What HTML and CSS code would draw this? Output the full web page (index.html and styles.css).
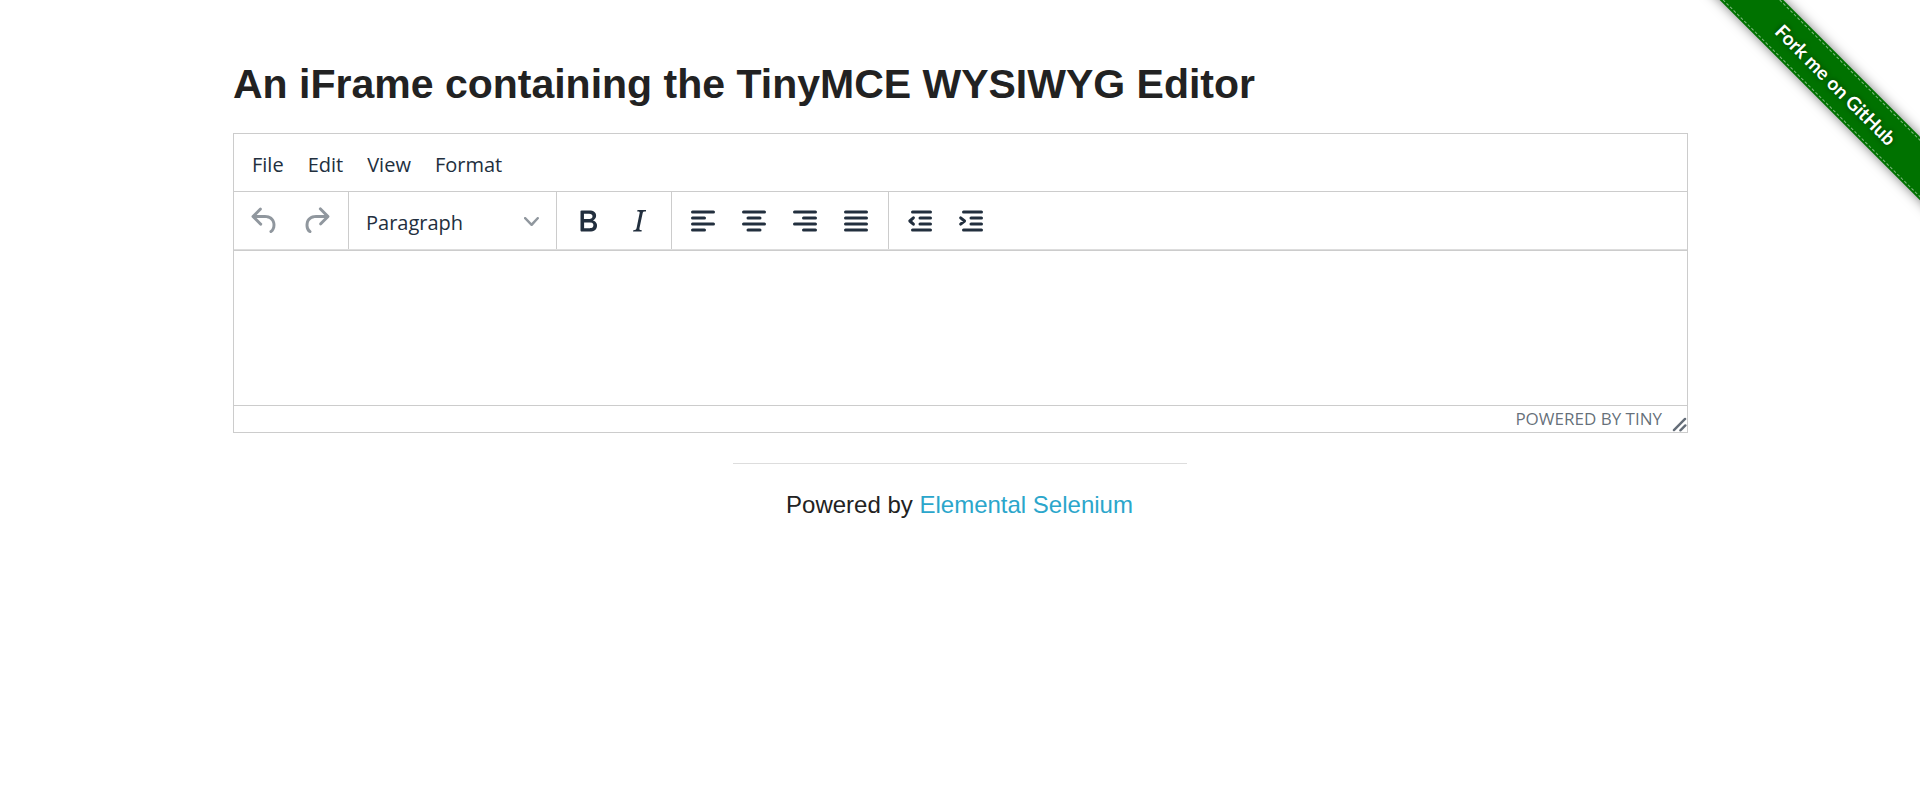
FILE: index.html
```html
<!DOCTYPE html>
<html lang="en">
<head>
<meta charset="utf-8">
<meta name="viewport" content="width=device-width, initial-scale=1">
<title>The Internet</title>
<link rel="stylesheet" href="styles.css">
</head>
<body>
<div class="ribbon-corner">
  <a class="ribbon" href="#github"><span class="ribbon-text">Fork me on GitHub</span></a>
</div>

<main class="page">
  <h1 class="title">An iFrame containing the TinyMCE WYSIWYG Editor</h1>

  <section class="editor" aria-label="Rich text editor">
    <div class="menubar" role="menubar">
      <button class="menu-item" type="button" role="menuitem">File</button>
      <button class="menu-item" type="button" role="menuitem">Edit</button>
      <button class="menu-item" type="button" role="menuitem">View</button>
      <button class="menu-item" type="button" role="menuitem">Format</button>
    </div>

    <div class="toolbar" role="toolbar" aria-label="Formatting">
      <div class="group">
        <button class="tool" type="button" aria-label="Undo" disabled>
          <svg class="icon" viewBox="0 0 24 24"><path d="M6.4 8H12c3.7 0 6.2 2 6.8 5.1.6 2.7-.4 5.6-2.3 6.8a1 1 0 0 1-1-1.8c1.1-.6 1.8-2.7 1.4-4.6-.5-2.1-2.1-3.5-4.9-3.5H6.4l3.3 3.3a1 1 0 1 1-1.4 1.4l-5-5a1 1 0 0 1 0-1.4l5-5a1 1 0 0 1 1.4 1.4L6.4 8z"/></svg>
        </button>
        <button class="tool" type="button" aria-label="Redo" disabled>
          <svg class="icon" viewBox="0 0 24 24"><path d="M17.6 10H12c-2.8 0-4.4 1.4-4.9 3.5-.4 2 .3 4 1.4 4.6a1 1 0 1 1-1 1.8c-2-1.2-2.9-4.1-2.3-6.8.6-3 3-5.1 6.8-5.1h5.6l-3.3-3.3a1 1 0 1 1 1.4-1.4l5 5a1 1 0 0 1 0 1.4l-5 5a1 1 0 0 1-1.4-1.4l3.3-3.3z"/></svg>
        </button>
      </div>
      <div class="group">
        <div class="picker">
          <select class="picker-select" aria-label="Blocks">
            <option>Paragraph</option>
            <option>Heading 1</option>
            <option>Heading 2</option>
            <option>Heading 3</option>
          </select>
          <svg class="chevron" viewBox="0 0 10 10"><path d="M8.7 2.2c.3-.3.8-.3 1 0 .4.4.4.9 0 1.2L5.7 7.8c-.3.3-.9.3-1.2 0L.2 3.4a.8.8 0 0 1 0-1.2c.3-.3.8-.3 1.1 0L5 6l3.7-3.8z"/></svg>
        </div>
      </div>
      <div class="group">
        <button class="tool" type="button" aria-label="Bold">
          <svg class="icon" viewBox="0 0 24 24"><path fill-rule="evenodd" d="M7.8 19c-.3 0-.5 0-.6-.2l-.2-.5V5.7c0-.2 0-.4.2-.5l.6-.2h5c1.5 0 2.7.3 3.5 1 .7.6 1.1 1.4 1.1 2.5a3 3 0 0 1-.6 1.9c-.4.6-1 1-1.6 1.2.4.1.9.3 1.3.6s.8.7 1 1.2c.4.4.5 1 .5 1.6 0 1.3-.4 2.3-1.3 3-.8.7-2.1 1-3.8 1H7.8zm5-8.3c.6 0 1.2-.1 1.6-.5.4-.3.6-.7.6-1.3 0-1.1-.8-1.7-2.3-1.7H9.3v3.5h3.4zm.5 6c.7 0 1.3-.1 1.7-.4.4-.4.6-.9.6-1.5s-.2-1-.7-1.4c-.4-.3-1-.4-2-.4H9.4v3.8h4z"/></svg>
        </button>
        <button class="tool" type="button" aria-label="Italic">
          <svg class="icon" viewBox="0 0 24 24"><path d="M16.7 4.7l-.1.9h-.3c-.6 0-1 0-1.4.3-.3.3-.4.6-.5 1.1l-2.1 9.8v.6c0 .5.4.8 1.4.8h.2l-.2.8H8l.2-.8h.2c1.1 0 1.8-.5 2-1.5l2-9.8.1-.5c0-.6-.4-.8-1.4-.8h-.3l.2-.9h5.8z"/></svg>
        </button>
      </div>
      <div class="group">
        <button class="tool" type="button" aria-label="Align left">
          <svg class="icon icon-lines" viewBox="0 0 24 24"><path d="M5 6h14M5 10h8M5 14h14M5 18h8"/></svg>
        </button>
        <button class="tool" type="button" aria-label="Align center">
          <svg class="icon icon-lines" viewBox="0 0 24 24"><path d="M5 6h14M8 10h8M5 14h14M8 18h8"/></svg>
        </button>
        <button class="tool" type="button" aria-label="Align right">
          <svg class="icon icon-lines" viewBox="0 0 24 24"><path d="M5 6h14M11 10h8M5 14h14M11 18h8"/></svg>
        </button>
        <button class="tool" type="button" aria-label="Justify">
          <svg class="icon icon-lines" viewBox="0 0 24 24"><path d="M5 6h14M5 10h14M5 14h14M5 18h14"/></svg>
        </button>
      </div>
      <div class="group">
        <button class="tool" type="button" aria-label="Decrease indent">
          <svg class="icon icon-lines" viewBox="0 0 24 24"><path d="M7 6h12M12 10h7M12 14h7M7 18h12M7.600 9.900L5.200 12l2.400 2.100"/></svg>
        </button>
        <button class="tool" type="button" aria-label="Increase indent">
          <svg class="icon icon-lines" viewBox="0 0 24 24"><path d="M7 6h12M12 10h7M12 14h7M7 18h12M5.100 9.900L7.700 12l-2.600 2.100"/></svg>
        </button>
      </div>
    </div>

    <textarea class="content" aria-label="Rich Text Area"></textarea>

    <div class="statusbar">
      <a class="branding" href="#tiny">POWERED BY TINY</a>
      <svg class="resize" viewBox="0 0 10 10"><path d="M1.300 8.700L8.700 1.300M5.600 8.900L8.900 5.600"/></svg>
    </div>
  </section>

  <footer class="footer">
    <hr class="rule">
    <p class="credit">Powered by <a class="credit-link" href="#elemental-selenium">Elemental Selenium</a></p>
  </footer>
</main>
</body>
</html>
```
FILE: styles.css
```css
* {
  box-sizing: border-box;
}

body {
  margin: 0;
  background: #fff;
  color: #222;
  font-family: "Liberation Sans", Arial, sans-serif;
}

.page {
  max-width: 1500px;
  margin: 0 auto;
  padding: 56px 22px 0 23px;
}

.title {
  margin: 0 0 20px;
  font-size: 41px;
  line-height: 57px;
}

.editor {
  display: flex;
  flex-direction: column;
  border: 1px solid #ccc;
  background: #fff;
  color: #222f3e;
  font-family: "Open Sans", "Noto Sans", sans-serif;
}

.menubar {
  display: flex;
  padding: 6px;
  border-bottom: 1px solid #ccc;
}

.menu-item {
  height: 45px;
  padding: 4px 12px 0;
  border: 0;
  background: transparent;
  color: inherit;
  font: inherit;
  font-size: 20px;
}

.toolbar {
  display: flex;
  flex-wrap: wrap;
  border-bottom: 1px solid #ddd;
}

.group {
  display: flex;
  padding: 4px 7px 3px 5px;
  border-right: 1px solid #ccc;
}

.group:last-child {
  border-right: 0;
}

.tool {
  display: grid;
  place-items: center;
  width: 51px;
  height: 50px;
  padding: 0;
  border: 0;
  background: transparent;
  color: inherit;
}

.tool:disabled {
  color: rgba(34, 47, 62, 0.5);
}

.icon {
  width: 36px;
  height: 36px;
  fill: currentColor;
}

.icon-lines {
  fill: none;
  stroke: currentColor;
  stroke-width: 2;
  stroke-linecap: round;
  stroke-linejoin: round;
}

.picker {
  display: grid;
  align-items: center;
  width: 195px;
}

.picker-select,
.chevron {
  grid-area: 1 / 1;
}

.picker-select {
  width: 100%;
  height: 50px;
  padding: 2px 12px 0;
  border: 0;
  appearance: none;
  background: transparent;
  color: inherit;
  font: inherit;
  font-size: 20px;
}

.chevron {
  justify-self: end;
  width: 15px;
  height: 15px;
  margin-right: 10px;
  fill: rgba(34, 47, 62, 0.5);
  pointer-events: none;
}

.content {
  display: block;
  width: 100%;
  height: 155px;
  padding: 16px;
  border: 0;
  border-top: 1px solid #ccc;
  outline: 0;
  resize: none;
  font: inherit;
  font-size: 20px;
}

.statusbar {
  display: flex;
  align-items: center;
  justify-content: flex-end;
  height: 27px;
  border-top: 1px solid #ccc;
  color: rgba(34, 47, 62, 0.7);
}

.branding {
  color: inherit;
  font-size: 17px;
  line-height: 26px;
  text-decoration: none;
}

.resize {
  align-self: flex-end;
  width: 15px;
  height: 15px;
  margin-left: 10px;
  fill: none;
  stroke: currentColor;
  stroke-width: 1.6;
  stroke-linecap: round;
}

.footer {
  display: flex;
  flex-direction: column;
  align-items: center;
  padding: 30px 2px 0 0;
}

.rule {
  width: 100%;
  max-width: 454px;
  margin: 0;
  border: 0;
  border-top: 1px solid #ddd;
}

.credit {
  margin: 22px 0 0;
  font-size: 24px;
  line-height: 38px;
}

.credit-link {
  color: #2ba6cb;
  text-decoration: none;
}

/* Corner ribbon laid over the page */
.ribbon-corner {
  position: absolute;
  top: 0;
  right: 0;
  width: 224px;
  height: 224px;
  overflow: hidden;
  pointer-events: none;
}

.ribbon {
  position: absolute;
  top: 62px;
  left: -20px;
  display: flex;
  flex-direction: column;
  justify-content: center;
  width: 320px;
  height: 45px;
  padding: 1px 0;
  transform: rotate(45deg);
  background: #007200;
  box-shadow: 0 0 12px rgba(0, 0, 0, 0.5);
  color: #fff;
  font-family: Lato, "Open Sans", sans-serif;
  font-size: 19px;
  font-weight: 700;
  text-align: center;
  text-decoration: none;
  text-shadow: 0 0 5px rgba(0, 0, 0, 0.5);
  pointer-events: auto;
}

.ribbon-text {
  border: dashed rgba(255, 255, 255, 0.5);
  border-width: 1px 0;
  line-height: 39px;
}
```
